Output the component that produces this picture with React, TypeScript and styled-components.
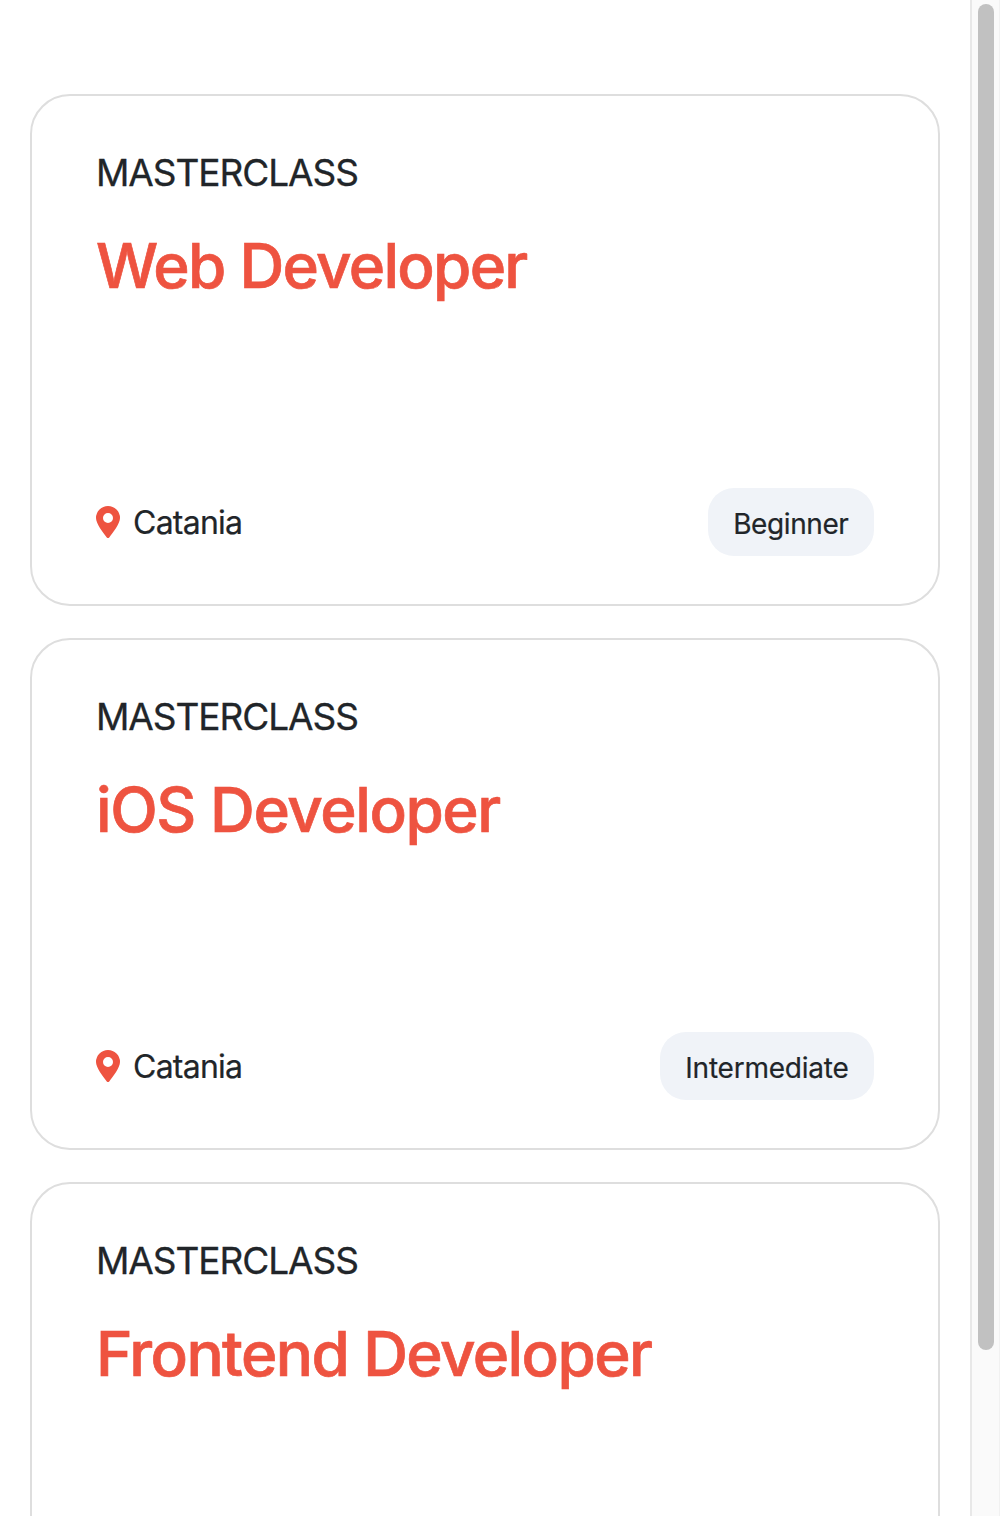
import React from "react";
import styled, { createGlobalStyle } from "styled-components";

const Global = createGlobalStyle`
  * { box-sizing: border-box; }
  body { margin: 0; background: #fff; color: #212529; font-family: Inter, sans-serif; overflow: hidden; }
`;

const Page = styled.div`
  display: flex;
  width: 100%;
  height: 1516px;
  overflow: hidden;
`;

const List = styled.main`
  display: flex;
  flex-direction: column;
  flex: 1;
  gap: 32px;
  padding: 94px 30px 0;
`;

const Card = styled.article`
  display: flex;
  flex-direction: column;
  flex: none;
  height: 512px;
  padding: 47px 64px 48px;
  border: 2px solid #dedede;
  border-radius: 40px;
`;

const Kind = styled.div`
  font-size: 37px;
  line-height: 60px;
  letter-spacing: -1.07px;
  white-space: nowrap;
  -webkit-text-stroke: 0.3px currentColor;
`;

const Title = styled.h2<{ $tracking: number }>`
  margin: 23px 0 0;
  color: #ee5340;
  font-size: 62px;
  font-weight: 500;
  line-height: 80px;
  letter-spacing: ${(p) => p.$tracking}px;
  white-space: nowrap;
  -webkit-text-stroke: 0.7px currentColor;
`;

const Footer = styled.footer`
  display: flex;
  align-items: center;
  justify-content: space-between;
  height: 68px;
  margin-top: auto;
`;

const Place = styled.div`
  display: flex;
  align-items: center;
  gap: 13px;
  font-size: 32px;
  letter-spacing: -0.75px;
  -webkit-text-stroke: 0.2px currentColor;
`;

const Pin = styled.svg`
  width: 24px;
  height: 32px;
  fill: #ee5340;
  stroke: none;
`;

const Level = styled.span<{ $tracking: number }>`
  display: flex;
  align-items: center;
  height: 68px;
  padding: 4px 25.5px 0;
  border-radius: 26px;
  background: #f0f3f8;
  font-size: 28px;
  letter-spacing: ${(p) => p.$tracking}px;
  -webkit-text-stroke: 0.2px currentColor;
`;

const Track = styled.div`
  width: 30px;
  padding: 4px 6px;
  border-left: 2px solid #e8e8e8;
  border-right: 1px solid #f1f1f1;
  background: #fafafa;
`;

const Thumb = styled.div`
  width: 16px;
  height: 1346px;
  border-radius: 8px;
  background: #c1c1c1;
`;

type Course = {
  title: string;
  titleTracking: number;
  city?: string;
  level?: string;
  levelTracking?: number;
};

const courses: Course[] = [
  { title: "Web Developer", titleTracking: -1.72, city: "Catania", level: "Beginner", levelTracking: -0.4 },
  { title: "iOS Developer", titleTracking: -1.42, city: "Catania", level: "Intermediate", levelTracking: -0.23 },
  { title: "Frontend Developer", titleTracking: -1.6 },
];

export default function App() {
  return (
    <Page>
      <Global />
      <List>
        {courses.map((course) => (
          <Card key={course.title}>
            <Kind>MASTERCLASS</Kind>
            <Title $tracking={course.titleTracking}>{course.title}</Title>
            {course.city && (
              <Footer>
                <Place>
                  <Pin viewBox="0 0 24 32">
                    <path
                      fillRule="evenodd"
                      d="M10.770 31.400C7.300 27.200 0 17.500 0 12a12 12 0 0 1 24 0c0 5.500-7.300 15.200-10.770 19.400a1.550 1.550 0 0 1-2.460 0zM12 17a5 5 0 1 0 0-10 5 5 0 0 0 0 10z"
                    />
                  </Pin>
                  <span>{course.city}</span>
                </Place>
                <Level $tracking={course.levelTracking ?? 0}>{course.level}</Level>
              </Footer>
            )}
          </Card>
        ))}
      </List>
      <Track>
        <Thumb />
      </Track>
    </Page>
  );
}
